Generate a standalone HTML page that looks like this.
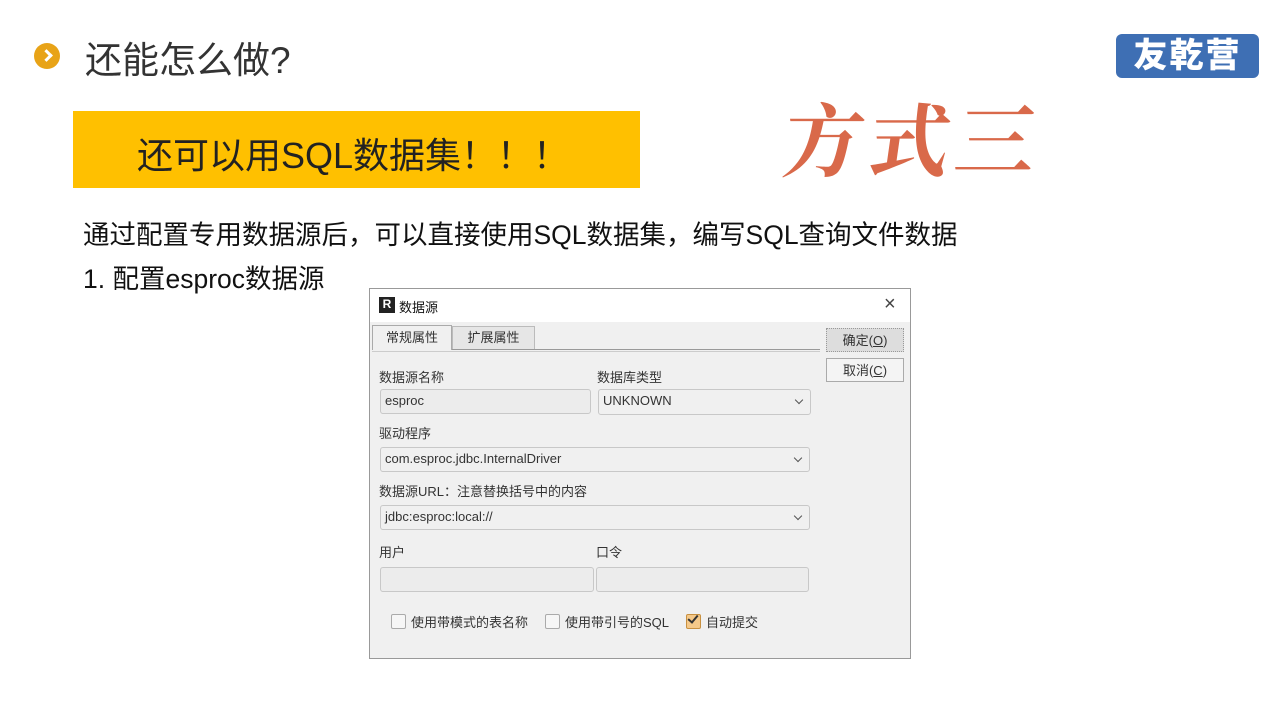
<!DOCTYPE html>
<html><head><meta charset="utf-8"><style>
body{margin:0;width:1280px;height:720px;background:#fff;position:relative;overflow:hidden;font-family:"Liberation Sans","Noto Sans CJK SC",sans-serif}
.a{position:absolute;white-space:nowrap}
.d{font-size:13px;color:#333}
.box{position:absolute;border:1px solid #c8c8c8;border-radius:3px;background:#ececec;box-sizing:border-box;font-size:13px;color:#333;padding-left:4px;line-height:22px}
.sel{background:#f0f0f0}
.sel:after{content:"";position:absolute;right:8px;top:7px;width:5px;height:5px;border-right:1.5px solid #555;border-bottom:1.5px solid #555;transform:rotate(45deg)}
.cb{position:absolute;width:13px;height:13px;border:1px solid #aaa;border-radius:2px;background:#f6f6f6}
</style></head><body>
<div class="a" style="left:34px;top:43px;width:26px;height:26px;border-radius:50%;background:#E8A317"></div>
<div class="a" style="left:42px;top:51px;width:6px;height:6px;border-right:3px solid #fff;border-top:3px solid #fff;transform:rotate(45deg)"></div>
<div class="a" style="left:85px;top:30px;font-size:37px;color:#333">还能怎么做?</div>
<div class="a" style="left:1116px;top:34px;width:143px;height:44px;border-radius:6px;background:#3E6FB4;color:#fff;font-size:34px;font-weight:900;text-align:center;line-height:44px;letter-spacing:2px">友乾营</div>
<div class="a" style="left:73px;top:111px;width:567px;height:77px;background:#FFC000"></div>
<div class="a" style="left:137px;top:127px;font-size:36px;color:#222">还可以用SQL数据集！！！</div>
<div class="a" style="left:785px;top:78px;font-size:80px;color:#D9694A;font-family:'Noto Serif CJK SC',serif;font-weight:bold;letter-spacing:6px;transform:skewX(-8deg)">方式三</div>
<div class="a" style="left:83px;top:213px;font-size:26.5px;color:#111">通过配置专用数据源后，可以直接使用SQL数据集，编写SQL查询文件数据</div>
<div class="a" style="left:83px;top:257px;font-size:26.5px;color:#111">1. 配置esproc数据源</div>

<div class="a" style="left:369px;top:288px;width:542px;height:371px;border:1px solid #999;box-sizing:border-box;background:#f0f0f0"></div>
<div class="a" style="left:370px;top:289px;width:540px;height:33px;background:#fff"></div>
<div class="a" style="left:379px;top:297px;width:16px;height:16px;background:#222;color:#fff;font-size:12px;font-weight:bold;text-align:center;line-height:15px">R</div>
<div class="a d" style="left:399px;top:297px;color:#111">数据源</div>
<div class="a" style="left:884px;top:293px;font-size:20px;color:#444">×</div>
<div class="a" style="left:372px;top:349px;width:448px;height:1px;background:#999"></div>
<div class="a" style="left:372px;top:351px;width:448px;height:1px;background:#ccc"></div>
<div class="a d" style="left:372px;top:325px;width:80px;height:25px;border:1px solid #aaa;border-bottom:none;background:#f0f0f0;text-align:center;line-height:24px;box-sizing:border-box">常规属性</div>
<div class="a d" style="left:452px;top:326px;width:83px;height:23px;border:1px solid #bbb;border-bottom:none;background:#e6e6e6;text-align:center;line-height:22px;box-sizing:border-box">扩展属性</div>
<div class="a d" style="left:826px;top:328px;width:78px;height:24px;border:1px dotted #999;background:#ddd;text-align:center;line-height:23px;box-sizing:border-box">确定(<u>O</u>)</div>
<div class="a d" style="left:826px;top:358px;width:78px;height:24px;border:1px solid #aaa;background:#f4f4f4;text-align:center;line-height:23px;box-sizing:border-box">取消(<u>C</u>)</div>
<div class="a d" style="left:379px;top:367px">数据源名称</div>
<div class="a d" style="left:597px;top:367px">数据库类型</div>
<div class="box" style="left:380px;top:389px;width:211px;height:25px">esproc</div>
<div class="box sel" style="left:598px;top:389px;width:213px;height:26px">UNKNOWN</div>
<div class="a d" style="left:379px;top:423px">驱动程序</div>
<div class="box sel" style="left:380px;top:447px;width:430px;height:25px">com.esproc.jdbc.InternalDriver</div>
<div class="a d" style="left:379px;top:481px">数据源URL：注意替换括号中的内容</div>
<div class="box sel" style="left:380px;top:505px;width:430px;height:25px">jdbc:esproc:local://</div>
<div class="a d" style="left:379px;top:542px">用户</div>
<div class="a d" style="left:596px;top:542px">口令</div>
<div class="box" style="left:380px;top:567px;width:214px;height:25px"></div>
<div class="box" style="left:596px;top:567px;width:213px;height:25px"></div>
<div class="cb" style="left:391px;top:614px"></div>
<div class="a d" style="left:411px;top:612px">使用带模式的表名称</div>
<div class="cb" style="left:545px;top:614px"></div>
<div class="a d" style="left:565px;top:612px">使用带引号的SQL</div>
<div class="cb" style="left:686px;top:614px;background:#f5c98a;border-color:#c89040"></div>
<div class="a" style="left:690px;top:613px;width:4px;height:8px;border-right:2px solid #333;border-bottom:2px solid #333;transform:rotate(40deg)"></div>
<div class="a d" style="left:706px;top:612px">自动提交</div>
</body></html>
